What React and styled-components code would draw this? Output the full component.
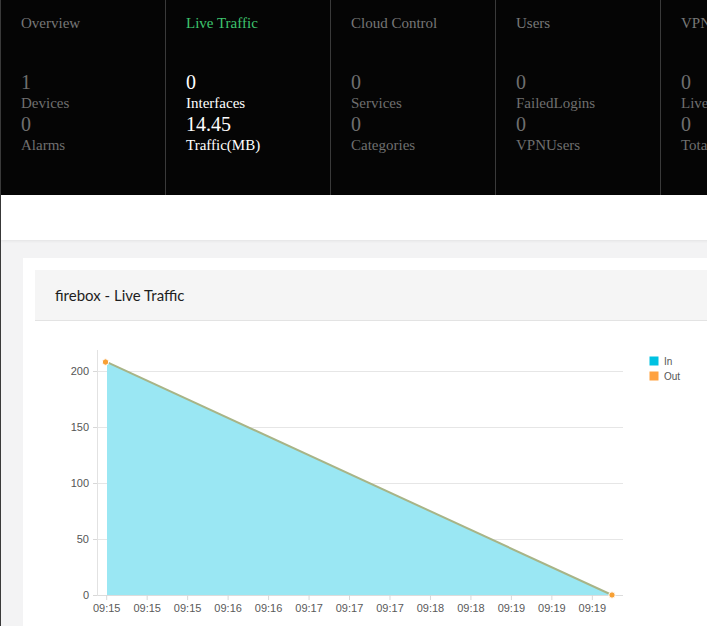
import React from "react";
import styled, { createGlobalStyle } from "styled-components";

const Global = createGlobalStyle`
  html, body { margin: 0; padding: 0; overflow: hidden; background: #f3f3f4; }
  * { box-sizing: border-box; }
`;

const Page = styled.div`
  width: 1000px;
  min-height: 626px;
  border-left: 1px solid #3a3a3a;
  background: #f3f3f4;
`;

const StatsBar = styled.div`
  display: flex;
  height: 195px;
  background: #050505;
`;

const StatColumn = styled.div`
  flex: 0 0 165px;
  height: 100%;
  border-right: 1px solid #3a3a3a;
  padding: 13px 10px 0 20px;
  font-family: "Liberation Serif", "Times New Roman", serif;
  color: ${(p) => (p.$active ? "#ffffff" : "#6f6f6f")};
`;

const StatTitle = styled.div`
  font-size: 15px;
  line-height: 20px;
  color: ${(p) => (p.$active ? "#3ec46e" : "#777777")};
  white-space: nowrap;
`;

const StatList = styled.div`
  margin-top: 39px;
  display: flex;
  flex-direction: column;
`;

const StatNumber = styled.div`
  font-size: 20px;
  line-height: 21px;
  font-weight: 300;
`;

const StatLabel = styled.div`
  font-size: 15px;
  line-height: 21px;
  white-space: nowrap;
`;

const Band = styled.div`
  height: 45px;
  background: #ffffff;
  box-shadow: 0 1px 3px rgba(0, 0, 0, 0.07);
  position: relative;
`;

const Content = styled.div`
  padding: 18px 0 0 22px;
`;

const Card = styled.div`
  background: #ffffff;
  padding: 12px 0 0 12px;
  min-height: 400px;
`;

const CardHeader = styled.div`
  height: 51px;
  display: flex;
  align-items: center;
  padding-left: 20px;
  background: #f5f5f5;
  border-bottom: 1px solid #e3e3e3;
  font-family: Lato, "Liberation Sans", sans-serif;
  font-size: 15px;
  color: #1e1e1e;
`;

const ChartSvg = styled.svg`
  display: block;
  font-family: "Liberation Sans", Arial, sans-serif;
`;

const columns = [
  { title: "Overview", stats: [["1", "Devices"], ["0", "Alarms"]] },
  { title: "Live Traffic", active: true, stats: [["0", "Interfaces"], ["14.45", "Traffic(MB)"]] },
  { title: "Cloud Control", stats: [["0", "Services"], ["0", "Categories"]] },
  { title: "Users", stats: [["0", "FailedLogins"], ["0", "VPNUsers"]] },
  { title: "VPN", stats: [["0", "LiveVPN"], ["0", "Total"]] },
  { title: "", stats: [] },
];

const xLabels = [
  "09:15", "09:15", "09:15", "09:16", "09:16", "09:17", "09:17",
  "09:17", "09:18", "09:18", "09:19", "09:19", "09:19",
];

function Chart() {
  const yVals = [200, 150, 100, 50, 0];
  const yOf = (v) => 274 - v * 1.12;
  const x0 = 62.5;
  const x1 = 588;
  const tickX = (i) => 71.7 + i * 40.47;
  const start = { x: 72, y: yOf(208) };
  const end = { x: 577, y: 274 };
  return (
    <ChartSvg width="650" height="300" viewBox="0 0 650 300">
      {yVals.map((v) => (
        <g key={v}>
          <line x1={x0} x2={x1} y1={yOf(v) + 0.5} y2={yOf(v) + 0.5} stroke="#e6e6e6" strokeWidth="1" />
          <line x1={58} x2={x0} y1={yOf(v) + 0.5} y2={yOf(v) + 0.5} stroke="#d8d8d8" strokeWidth="1" />
          <text x="54" y={yOf(v) + 4} textAnchor="end" fontSize="11" fill="#555">
            {v}
          </text>
        </g>
      ))}
      <line x1={x0} x2={x0} y1={29} y2={274} stroke="#e2e2e2" strokeWidth="1" />
      <line x1={x0} x2={x1} y1={274.5} y2={274.5} stroke="#dcdcdc" strokeWidth="1" />
      {xLabels.map((l, i) => (
        <g key={i}>
          <line x1={tickX(i)} x2={tickX(i)} y1={274} y2={279} stroke="#d8d8d8" strokeWidth="1" />
          <text x={tickX(i)} y={290.5} textAnchor="middle" fontSize="11" fill="#5a5a5a">
            {l}
          </text>
        </g>
      ))}
      <polygon
        points={`${start.x},${start.y} ${end.x},${end.y} ${start.x},${end.y}`}
        fill="#9ae7f3"
      />
      <line x1={start.x} y1={start.y} x2={end.x} y2={end.y} stroke="#a8b487" strokeWidth="2" />
      <circle cx={start.x - 1.5} cy={start.y} r="3.2" fill="#f7a035" stroke="#ffffff" strokeWidth="1" />
      <circle cx={end.x} cy={end.y} r="3.2" fill="#f7a035" stroke="#ffffff" strokeWidth="1" />
      <rect x="614.5" y="35.5" width="9" height="9" fill="#00c2e2" />
      <text x="629" y="44" fontSize="10" fill="#555">In</text>
      <rect x="614.5" y="50.5" width="9" height="9" fill="#ffa240" />
      <text x="629" y="59" fontSize="10" fill="#555">Out</text>
    </ChartSvg>
  );
}

export default function App() {
  return (
    <>
      <Global />
      <Page>
        <StatsBar>
          {columns.map((c, i) => (
            <StatColumn key={i} $active={c.active}>
              <StatTitle $active={c.active}>{c.title || "\u00a0"}</StatTitle>
              <StatList>
                {c.stats.map(([n, l], j) => (
                  <React.Fragment key={j}>
                    <StatNumber>{n}</StatNumber>
                    <StatLabel>{l}</StatLabel>
                  </React.Fragment>
                ))}
              </StatList>
            </StatColumn>
          ))}
        </StatsBar>
        <Band />
        <Content>
          <Card>
            <CardHeader>firebox - Live Traffic</CardHeader>
            <Chart />
          </Card>
        </Content>
      </Page>
    </>
  );
}
